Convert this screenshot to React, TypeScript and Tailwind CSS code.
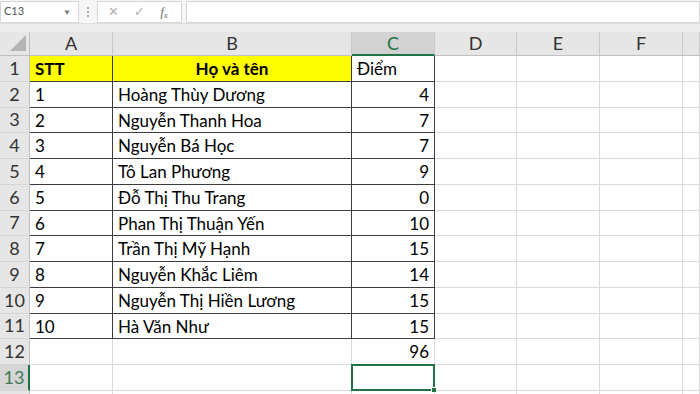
import { ReactNode } from "react";

const rows: { stt: string; name: string; score: string }[] = [
	{ stt: "1", name: "Hoàng Thùy Dương", score: "4" },
	{ stt: "2", name: "Nguyễn Thanh Hoa", score: "7" },
	{ stt: "3", name: "Nguyễn Bá Học", score: "7" },
	{ stt: "4", name: "Tô Lan Phương", score: "9" },
	{ stt: "5", name: "Đỗ Thị Thu Trang", score: "0" },
	{ stt: "6", name: "Phan Thị Thuận Yến", score: "10" },
	{ stt: "7", name: "Trần Thị Mỹ Hạnh", score: "15" },
	{ stt: "8", name: "Nguyễn Khắc Liêm", score: "14" },
	{ stt: "9", name: "Nguyễn Thị Hiền Lương", score: "15" },
	{ stt: "10", name: "Hà Văn Như", score: "15" },
];

const letters = ["A", "B", "C", "D", "E", "F", ""];

function ColHead({ label }: { label: string }) {
	const active = label === "C";
	return (
		<div className={`flex items-center justify-center text-[18px] border-r border-[#c8c8c8] ${active ? "bg-[#d2d2d2] text-[#217346] border-b-2 border-b-[#217346]" : "bg-[#e6e6e6] text-[#333] border-b border-b-[#c0c0c0]"}`}>
			{label}
		</div>
	);
}

function RowHead({ n }: { n?: number }) {
	const active = n === 13;
	return (
		<div className={`flex items-center justify-center text-[18px] border-b border-[#d4d4d4] ${active ? "bg-[#d6d6d6] text-[#3f7a58] border-r-2 border-r-[#217346]" : "bg-[#e6e6e6] text-[#333] border-r border-r-[#c0c0c0]"}`}>
			{n}
		</div>
	);
}

// plain gridline cell, dark = inside the bordered table
function Cell({ children, dark, className = "" }: { children?: ReactNode; dark?: boolean; className?: string }) {
	return <div className={`flex items-center pt-[1px] px-[5px] overflow-hidden whitespace-nowrap border-r border-b ${dark ? "border-[#3c3c3c]" : "border-[#dadada]"} ${className}`}>{children}</div>;
}

function Blank() {
	return (
		<>
			<Cell />
			<Cell />
			<Cell />
			<Cell />
		</>
	);
}

export default function App() {
	return (
		<div className="w-[700px] h-[394px] overflow-hidden bg-white text-[17px] text-black font-['Lato',sans-serif]">
			{/* formula bar */}
			<div className="h-[32px] bg-[#ececec]">
				<div className="h-[24px] flex items-center bg-[#f6f6f6] border-b border-[#dedede]">
					<div className="w-[79px] h-[22px] bg-white border border-[#d6d6d6] flex items-center justify-between pl-[3px] pr-[7px] text-[11px] text-[#555]">
						<span>C13</span>
						<span className="text-[8px] text-[#777]">▼</span>
					</div>
					<div className="w-[18px] flex flex-col items-center gap-[2px]">
						<span className="w-[2px] h-[2px] bg-[#aaa]" />
						<span className="w-[2px] h-[2px] bg-[#aaa]" />
						<span className="w-[2px] h-[2px] bg-[#aaa]" />
					</div>
					<div className="w-[85px] h-[22px] bg-white border border-[#d6d6d6] flex items-center text-[#b0b0b0]">
						<span className="w-[30px] text-center text-[13px]">✕</span>
						<span className="w-[22px] text-center text-[13px]">✓</span>
						<span className="w-[28px] text-center text-[12px] italic text-[#666] font-['Liberation_Serif',serif]">
							f<sub className="text-[8px]">x</sub>
						</span>
					</div>
					<div className="flex-1 h-[22px] ml-[4px] bg-white border border-[#d6d6d6]" />
				</div>
			</div>

			{/* sheet */}
			<div className="grid grid-cols-[30px_83px_239px_83px_82px_83px_83px_1fr] grid-rows-[24px_repeat(14,25.75px)]">
				<div className="relative bg-[#e6e6e6] border-r border-b border-[#c0c0c0]">
					<div className="absolute left-[10px] top-[3px] w-0 h-0 border-l-[16px] border-l-transparent border-b-[16px] border-b-[#b4b4b4]" />
				</div>
				{letters.map((l, i) => (
					<ColHead key={i} label={l} />
				))}

				<RowHead n={1} />
				<Cell dark className="bg-[#ffff00] font-bold">STT</Cell>
				<Cell dark className="bg-[#ffff00] font-bold justify-center">Họ và tên</Cell>
				<Cell dark>Điểm</Cell>
				<Blank />

				{rows.map((r, i) => (
					<div key={r.stt} className="contents">
						<RowHead n={i + 2} />
						<Cell dark>{r.stt}</Cell>
						<Cell dark>{r.name}</Cell>
						<Cell dark className="justify-end">{r.score}</Cell>
						<Blank />
					</div>
				))}

				<RowHead n={12} />
				<Cell />
				<Cell />
				<Cell className="justify-end">96</Cell>
				<Blank />

				<RowHead n={13} />
				<Cell />
				<Cell />
				<div className="relative border-2 border-[#217346] -ml-px -mt-px">
					<div className="absolute -right-[4px] -bottom-[4px] w-[6px] h-[6px] bg-[#217346] border border-white" />
				</div>
				<Blank />

				{/* row 14 barely shows under the fold */}
				<RowHead />
				<Cell />
				<Cell />
				<Cell />
				<Blank />
			</div>
		</div>
	);
}
